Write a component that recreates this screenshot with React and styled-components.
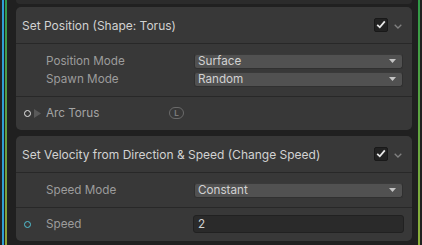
import React from "react";
import styled, { createGlobalStyle } from "styled-components";

const Global = createGlobalStyle`
  html, body { margin: 0; padding: 0; background: #202020; }
  body { font-family: Inter, "Noto Sans", sans-serif; }
`;

const Root = styled.div`
  display: flex;
  width: 422px;
  height: 245px;
  background: #202020;
  overflow: hidden;
`;

const Gutter = styled.div`
  width: 16px;
  display: flex;
  padding-left: 2px;
  gap: 1px;
  box-sizing: border-box;
`;

const Stripe = styled.div`
  width: ${(p) => p.$w || 2}px;
  height: 100%;
  background: ${(p) => p.$bg};
`;

const Main = styled.div`
  flex: 1;
  display: flex;
  flex-direction: column;
  padding-right: 6px;
`;

const RightEdge = styled.div`
  width: 4px;
  display: flex;
`;

const PrevTail = styled.div`
  height: 4px;
  background: #2b2b2b;
  border-radius: 0 0 5px 5px;
  margin-bottom: 3px;
`;

const Panel = styled.div`
  background: #383838;
  border-radius: 5px;
  display: flex;
  flex-direction: column;
  margin-bottom: ${(p) => p.$mb || 0}px;
`;

const Header = styled.div`
  height: 36px;
  display: flex;
  align-items: center;
  padding-left: 6px;
  padding-right: 10px;
  border-bottom: 1px solid #282828;
`;

const Title = styled.div`
  flex: 1;
  color: #d2d2d2;
  font-size: 12px;
  white-space: nowrap;
  padding-top: 1px;
`;

const Check = styled.div`
  width: 14px;
  height: 14px;
  box-sizing: border-box;
  background: #222222;
  border: 1px solid #191919;
  border-radius: 2px;
  display: flex;
  align-items: center;
  justify-content: center;
  margin-right: 6px;
  margin-top: -1px;
`;

const Chevron = styled.div`
  display: flex;
  align-items: center;
  margin-top: 2px;
`;

const Section = styled.div`
  padding: ${(p) => p.$pad || "8px 0"};
  display: flex;
  flex-direction: column;
  border-bottom: ${(p) => (p.$last ? "none" : "1px solid #282828")};
`;

const Row = styled.div`
  height: 18px;
  display: flex;
  align-items: center;
  padding-right: 9px;
`;

const Lead = styled.div`
  width: 30px;
  display: flex;
  align-items: center;
  padding-left: 8px;
  box-sizing: border-box;
  gap: 3px;
`;

const Label = styled.div`
  width: 148px;
  color: ${(p) => p.$c || "#9c9c9c"};
  font-size: 11.7px;
  white-space: nowrap;
  display: flex;
  align-items: center;
  position: relative;
`;

const Port = styled.div`
  width: 7px;
  height: 7px;
  box-sizing: border-box;
  border-radius: 50%;
  border: 1.5px solid ${(p) => p.$c};
`;

const Badge = styled.div`
  position: absolute;
  left: 123px;
  top: 50%;
  transform: translateY(-50%);
  width: 15px;
  height: 12px;
  box-sizing: border-box;
  border: 1px solid #6a6a6a;
  border-radius: 6px;
  color: #7a7a7a;
  font-size: 8px;
  font-weight: 700;
  display: flex;
  align-items: center;
  justify-content: center;
`;

const Dropdown = styled.div`
  flex: 1;
  height: 15px;
  box-sizing: border-box;
  background: #515151;
  border: 1px solid #303030;
  border-top-color: #3a3a3a;
  border-radius: 3px;
  display: flex;
  align-items: center;
  padding: 0 6px 0 3px;
  color: #d2d2d2;
  font-size: 11.7px;
`;

const DdText = styled.div`
  flex: 1;
`;

const Field = styled.div`
  flex: 1;
  height: 18px;
  box-sizing: border-box;
  background: #2a2a2a;
  border: 1px solid #212121;
  border-radius: 3px;
  display: flex;
  align-items: center;
  padding-left: 4px;
  color: #d2d2d2;
  font-size: 11.7px;
  margin-left: -1px;
  margin-right: -1px;
`;

const CheckMark = () => (
  <svg width="10" height="9" viewBox="0 0 10 9">
    <path d="M1.2 4.8 L3.8 7.3 L8.8 1.3" fill="none" stroke="#e8e8e8" strokeWidth="1.8" />
  </svg>
);

const ChevronIcon = () => (
  <svg width="8" height="5" viewBox="0 0 8 5">
    <path d="M0.7 0.7 L4 4 L7.3 0.7" fill="none" stroke="#808080" strokeWidth="1.3" />
  </svg>
);

const Arrow = () => (
  <svg width="7" height="4" viewBox="0 0 7 4">
    <path d="M0 0 H7 L3.5 4 Z" fill="#c4c4c4" />
  </svg>
);

const Tri = () => (
  <svg width="7" height="9" viewBox="0 0 7 9">
    <path d="M0 0 L7 4.5 L0 9 Z" fill="#5a5a5a" />
  </svg>
);

const PanelHeader = ({ title }) => (
  <Header>
    <Title>{title}</Title>
    <Check>
      <CheckMark />
    </Check>
    <Chevron>
      <ChevronIcon />
    </Chevron>
  </Header>
);

const DropRow = ({ label, value }) => (
  <Row>
    <Lead />
    <Label>{label}</Label>
    <Dropdown>
      <DdText>{value}</DdText>
      <Arrow />
    </Dropdown>
  </Row>
);

export default function App() {
  return (
    <Root>
      <Global />
      <Gutter>
        <Stripe $w={2} $bg="#2f9fd6" />
        <Stripe $w={2} $bg="linear-gradient(#2f9a52, #8fa33a)" />
      </Gutter>
      <Main>
        <PrevTail />
        <Panel $mb={6}>
          <PanelHeader title="Set Position (Shape: Torus)" />
          <Section>
            <DropRow label="Position Mode" value="Surface" />
            <DropRow label="Spawn Mode" value="Random" />
          </Section>
          <Section $last $pad="7px 0 8px">
            <Row>
              <Lead>
                <Port $c="#e6e6e6" />
                <Tri />
              </Lead>
              <Label $c="#a4a4a4">
                Arc Torus
                <Badge>L</Badge>
              </Label>
            </Row>
          </Section>
        </Panel>
        <Panel>
          <PanelHeader title="Set Velocity from Direction & Speed (Change Speed)" />
          <Section>
            <DropRow label="Speed Mode" value="Constant" />
          </Section>
          <Section $last $pad="7px 0 8px">
            <Row>
              <Lead>
                <Port $c="#52c2d4" />
              </Lead>
              <Label>Speed</Label>
              <Field>2</Field>
            </Row>
          </Section>
        </Panel>
      </Main>
      <RightEdge>
        <Stripe $w={2} $bg="linear-gradient(#2f9a48, #8fb03a)" />
      </RightEdge>
    </Root>
  );
}
